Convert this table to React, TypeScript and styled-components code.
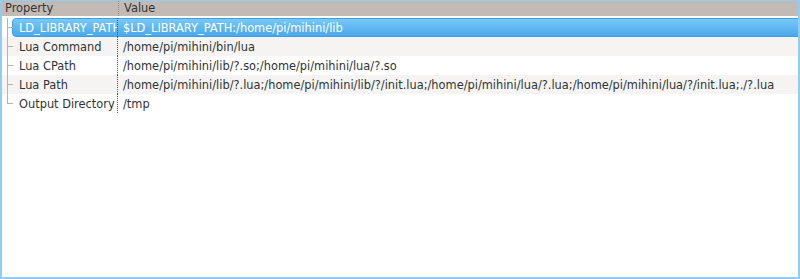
import styled, { createGlobalStyle } from "styled-components";

const GlobalStyle = createGlobalStyle`
  html, body {
    margin: 0;
    padding: 0;
    background: #ffffff;
  }
  body {
    font-family: "DejaVu Sans", "Liberation Sans", sans-serif;
    font-size: 11.4px;
    color: #2e3436;
  }
`;

type Entry = { name: string; value: string };

const entries: Entry[] = [
  { name: "LD_LIBRARY_PATH", value: "$LD_LIBRARY_PATH:/home/pi/mihini/lib" },
  { name: "Lua Command", value: "/home/pi/mihini/bin/lua" },
  { name: "Lua CPath", value: "/home/pi/mihini/lib/?.so;/home/pi/mihini/lua/?.so" },
  {
    name: "Lua Path",
    value:
      "/home/pi/mihini/lib/?.lua;/home/pi/mihini/lib/?/init.lua;/home/pi/mihini/lua/?.lua;/home/pi/mihini/lua/?/init.lua;./?.lua",
  },
  { name: "Output Directory", value: "/tmp" },
];

const SELECTED = 0;
const NAME_COL = 116;

export default function App() {
  return (
    <>
      <GlobalStyle />
      <TreeView>
        <Header>
          <HeaderCell>Property</HeaderCell>
          <HeaderCell $divider>Value</HeaderCell>
        </Header>
        <Body>
          {entries.map((e, i) => (
            <Row key={e.name} $alt={i % 2 === 1}>
              {i === SELECTED && <Selection />}
              <NameCell>
                <Branch $last={i === entries.length - 1} />
                <Label $selected={i === SELECTED}>{e.name}</Label>
              </NameCell>
              <ValueCell $selected={i === SELECTED}>{e.value}</ValueCell>
            </Row>
          ))}
          <Filler />
        </Body>
      </TreeView>
    </>
  );
}

const TreeView = styled.div`
  box-sizing: border-box;
  width: 800px;
  height: 279px;
  border: 2px solid #8fcdf2;
  border-top-width: 1px;
  display: flex;
  flex-direction: column;
  overflow: hidden;
  background: #ffffff;
`;

const Header = styled.div`
  display: grid;
  grid-template-columns: ${NAME_COL}px 1fr;
  height: 15px;
  background: #c1bab5;
  border-bottom: 1px solid #ffffff;
  flex-shrink: 0;
`;

const HeaderCell = styled.div<{ $divider?: boolean }>`
  padding-left: ${(p) => (p.$divider ? "5px" : "3px")};
  line-height: 15px;
  color: #353535;
  white-space: nowrap;
  border-left: ${(p) => (p.$divider ? "1px dotted #8c8580" : "none")};
`;

const Body = styled.div`
  display: flex;
  flex-direction: column;
  flex: 1;
  padding-top: 1px;
`;

const Row = styled.div<{ $alt: boolean }>`
  position: relative;
  display: grid;
  grid-template-columns: ${NAME_COL}px 1fr;
  height: 19px;
  background: ${(p) => (p.$alt ? "#f5f4f2" : "#ffffff")};
`;

const Selection = styled.div`
  position: absolute;
  left: 10px;
  right: -4px;
  top: 0;
  bottom: 0;
  border: 1px solid #3d9ee2;
  border-radius: 4px;
  background: linear-gradient(#78c8f7, #4aa8ea);
`;

const NameCell = styled.div`
  position: relative;
  display: flex;
  align-items: center;
  overflow: hidden;
  border-right: 1px dotted #555555;
`;

const Branch = styled.div<{ $last: boolean }>`
  position: absolute;
  left: 5px;
  top: 0;
  width: 5px;
  height: ${(p) => (p.$last ? "10px" : "19px")};
  border-left: 1px solid #b4b4b4;

  &::after {
    content: "";
    position: absolute;
    left: 0;
    top: 9px;
    width: 5px;
    border-top: 1px solid #b4b4b4;
  }
`;

const Label = styled.span<{ $selected: boolean }>`
  position: relative;
  padding-left: 17px;
  white-space: nowrap;
  color: ${(p) => (p.$selected ? "#ffffff" : "#2e3436")};
`;

const ValueCell = styled.div<{ $selected: boolean }>`
  position: relative;
  display: flex;
  align-items: center;
  padding-left: 5px;
  white-space: nowrap;
  overflow: hidden;
  color: ${(p) => (p.$selected ? "#ffffff" : "#2e3436")};
`;

const Filler = styled.div`
  flex: 1;
`;
